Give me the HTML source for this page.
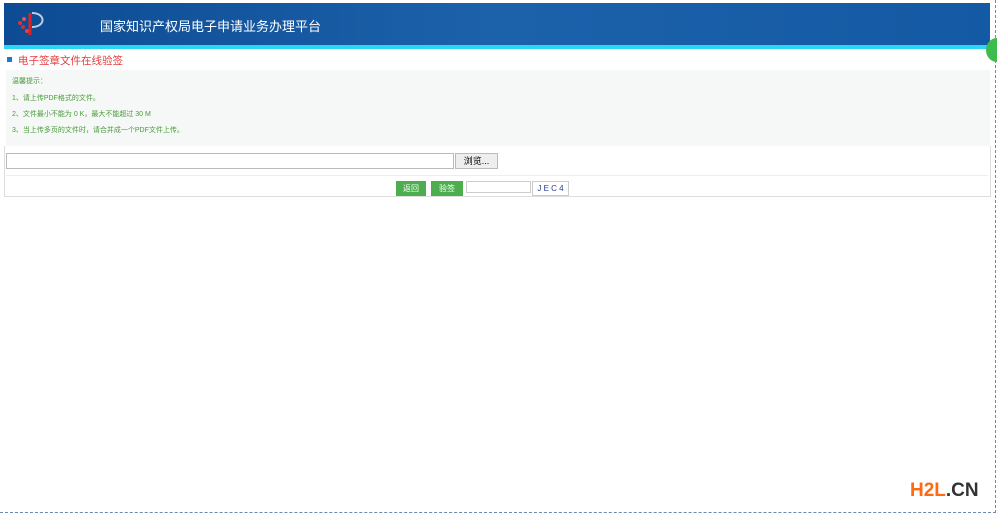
<!DOCTYPE html>
<html><head><meta charset="utf-8"><style>
body{margin:0;width:997px;height:514px;background:#fff;position:relative;overflow:hidden;font-family:"Liberation Sans","Noto Sans CJK SC",sans-serif}
.abs{position:absolute}
.h{left:4px;top:3px;width:986px;height:42px;background:linear-gradient(90deg,#0d4b93,#1c62ab 50%,#1459a3);}
.cy{left:4px;top:45px;width:986px;height:4px;background:#2ad6f0}
.t{left:100px;top:16px;color:#fff;font-size:13px}
.tips{left:6px;top:70px;width:984px;height:76px;background:#f5f8f6}
.tip{position:absolute;left:6px;color:#4a9a3a;font-size:7px}
.btn{background:#4cae4c;color:#fff;font-size:8px;text-align:center;line-height:15px;height:15px}
</style></head><body>
<div class="abs" style="left:0;top:0;width:995px;height:512px;border:1px dashed #6a8ab0;border-top:none;border-left:none"></div>
<div class="abs h"></div><div class="abs cy"></div>
<svg class="abs" style="left:14px;top:9px" width="36" height="30"><circle cx="6" cy="14" r="2" fill="#d33"/><circle cx="10" cy="10" r="2" fill="#d55"/><circle cx="9" cy="18" r="2" fill="#c33"/><circle cx="13" cy="22" r="2" fill="#d44"/><path d="M16 4 L16 26" stroke="#d22" stroke-width="3"/><path d="M18 4 C32 4 32 18 18 18" stroke="#bcd" stroke-width="2" fill="none"/></svg>
<div class="abs t">国家知识产权局电子申请业务办理平台</div>
<div class="abs" style="left:986px;top:38px;width:22px;height:24px;border-radius:50%;background:#3dbb4c"></div>
<div class="abs" style="left:7px;top:57px;width:5px;height:5px;background:#1a7ad0"></div>
<div class="abs" style="left:18px;top:53px;color:#e53b3b;font-size:10.5px">电子签章文件在线验签</div>
<div class="abs tips">
<div class="tip" style="top:6px">温馨提示：</div>
<div class="tip" style="top:23px">1、请上传PDF格式的文件。</div>
<div class="tip" style="top:39px">2、文件最小不能为 0 K，最大不能超过 30 M</div>
<div class="tip" style="top:55px">3、当上传多页的文件时，请合并成一个PDF文件上传。</div>
</div>
<div class="abs" style="left:4px;top:146px;width:985px;height:50px;border:1px solid #ddd;border-top:none"></div>
<div class="abs" style="left:6px;top:153px;width:446px;height:14px;border:1px solid #bbb"></div>
<div class="abs" style="left:455px;top:153px;width:41px;height:14px;border:1px solid #bbb;background:#eee;font-size:9px;text-align:center;line-height:14px">浏览...</div>
<div class="abs" style="left:6px;top:175px;width:982px;height:1px;background:#eee"></div>
<div class="abs btn" style="left:396px;top:181px;width:30px">返回</div>
<div class="abs btn" style="left:431px;top:181px;width:32px">验签</div>
<div class="abs" style="left:466px;top:181px;width:63px;height:10px;border:1px solid #ccc"></div>
<div class="abs" style="left:532px;top:181px;width:35px;height:13px;border:1px solid #ccc;font-size:8px;color:#2a3a8a;line-height:13px;text-align:center">J E C 4</div>
<div class="abs" style="left:910px;top:480px;font-size:19px;font-weight:bold;color:#ff6a10">H2L<span style="color:#333">.CN</span></div>
</body></html>
